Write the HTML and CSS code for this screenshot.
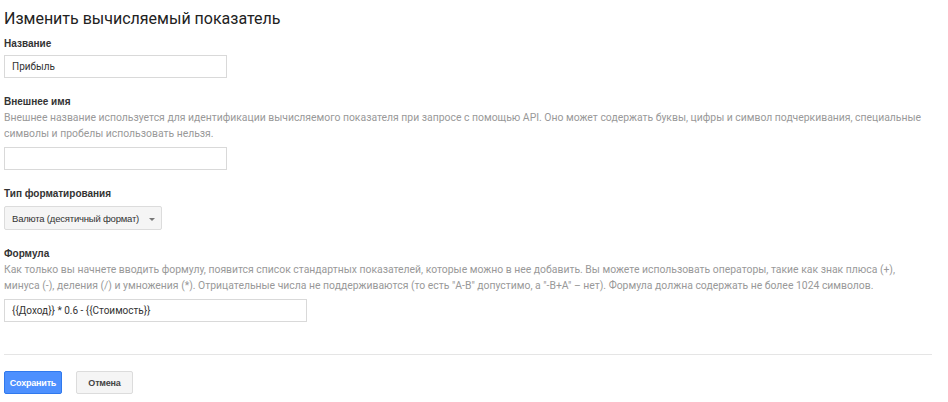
FILE: index.html
```html
<!DOCTYPE html>
<html lang="ru">
<head>
    <meta charset="UTF-8">
    <title>Изменить вычисляемый показатель</title>
    <link rel="stylesheet" href="styles.css">
</head>
<body>
    <div class="page">
        <h1 class="title">Изменить вычисляемый показатель</h1>

        <div class="field">
            <label class="label">Название</label>
            <input class="text-input short" type="text" value="Прибыль">
        </div>

        <div class="field">
            <label class="label">Внешнее имя</label>
            <p class="help">Внешнее название используется для идентификации вычисляемого показателя при запросе с помощью API. Оно может содержать буквы, цифры и символ подчеркивания, специальные символы и пробелы использовать нельзя.</p>
            <input class="text-input short" type="text" value="">
        </div>

        <div class="field">
            <label class="label">Тип форматирования</label>
            <div class="select">
                <span>Валюта (десятичный формат)</span>
                <span class="caret"></span>
            </div>
        </div>

        <div class="field">
            <label class="label">Формула</label>
            <p class="help">Как только вы начнете вводить формулу, появится список стандартных показателей, которые можно в нее добавить. Вы можете использовать операторы, такие как знак плюса (+), минуса (-), деления (/) и умножения (*). Отрицательные числа не поддерживаются (то есть "A-B" допустимо, а "-B+A" – нет). Формула должна содержать не более 1024 символов.</p>
            <input class="text-input long" type="text" value="{{Доход}} * 0.6 - {{Стоимость}}">
        </div>

        <div class="actions">
            <button class="btn btn-primary">Сохранить</button>
            <button class="btn btn-cancel">Отмена</button>
        </div>
    </div>
</body>
</html>
```

FILE: styles.css
```css
body {
    margin: 0;
    background: #fff;
    font-family: Roboto, Arial, sans-serif;
    color: #333;
}
.page {
    padding: 0 16px 0 4px;
}
.title {
    margin: 0;
    padding-top: 9px;
    font-size: 16px;
    font-weight: 400;
    line-height: 20px;
    color: #222;
}
.field {
    margin-top: 17px;
}
.title + .field {
    margin-top: 8px;
}
.label {
    display: block;
    font-family: "Liberation Sans", Arial, sans-serif;
    font-size: 10px;
    font-weight: bold;
    line-height: 14px;
    color: #333;
}
.help {
    margin: 1px 0 0;
    font-size: 10.4px;
    line-height: 15.5px;
    color: #999;
}
.text-input {
    display: block;
    box-sizing: border-box;
    height: 23px;
    margin-top: 4px;
    padding: 0 7px;
    border: 1px solid #d9d9d9;
    font-family: Roboto, Arial, sans-serif;
    font-size: 10px;
    color: #333;
    background: #fff;
}
.help + .text-input {
    margin-top: 6px;
}
.short {
    width: 223px;
}
.long {
    width: 303px;
}
.select {
    display: flex;
    align-items: center;
    gap: 10px;
    width: fit-content;
    box-sizing: border-box;
    height: 24px;
    margin-top: 5px;
    padding: 0 6px 0 7px;
    border: 1px solid #dcdcdc;
    border-radius: 2px;
    background: #f5f5f5;
    font-family: "Liberation Sans", Arial, sans-serif;
    font-size: 9.5px;
    letter-spacing: -0.2px;
    color: #333;
}
.caret {
    width: 0;
    height: 0;
    border-left: 3px solid transparent;
    border-right: 3px solid transparent;
    border-top: 3px solid #777;
    margin-top: 2px;
}
.actions {
    display: flex;
    gap: 14px;
    margin-top: 32px;
    padding-top: 16px;
    border-top: 1px solid #e5e5e5;
}
.btn {
    box-sizing: border-box;
    height: 23px;
    padding: 0;
    border: 1px solid #dcdcdc;
    border-radius: 2px;
    background: #f5f5f5;
    font-family: "Liberation Sans", Arial, sans-serif;
    font-size: 9px;
    font-weight: bold;
    letter-spacing: -0.2px;
    color: #444;
}
.btn-primary {
    width: 58px;
    border-color: #3079ed;
    background: #4d90fe;
    color: #fff;
}
.btn-cancel {
    width: 57px;
}
```
